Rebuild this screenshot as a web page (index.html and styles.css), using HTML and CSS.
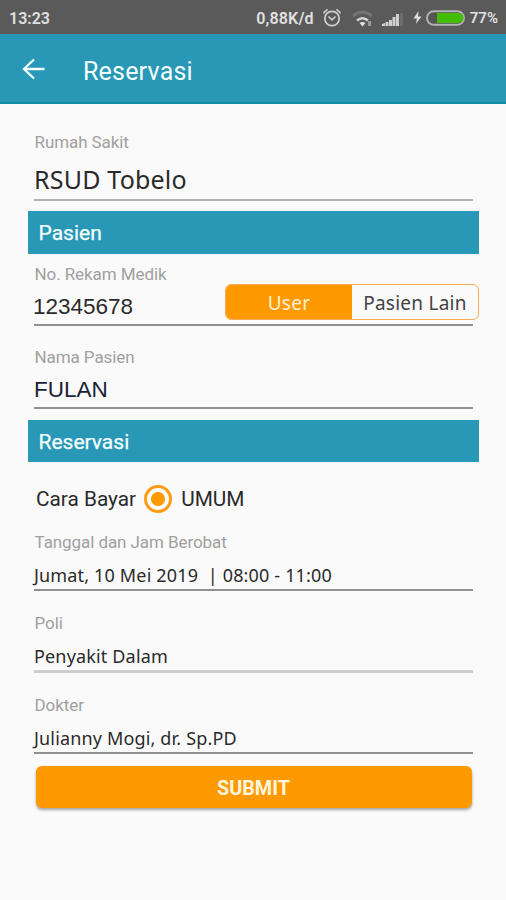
FILE: index.html
```html
<!DOCTYPE html>
<html lang="id">
<head>
<meta charset="utf-8">
<title>Reservasi</title>
<link rel="stylesheet" href="styles.css">
</head>
<body>
<div class="status">
  <span class="clock">13:23</span>
  <span class="rate">0,88K/d</span>
  <svg class="alarm" width="20" height="20" viewBox="0 0 20 20" fill="none" stroke="#cecece" stroke-width="1.7" stroke-linecap="round"><circle cx="10" cy="10.5" r="7.2"/><path d="M1.8 4.6 5 1.8M18.2 4.6 15 1.8M7 9l3 2.8L13 9"/></svg>
  <svg class="wifi" width="22" height="20" viewBox="0 0 22 20" fill="none"><path d="M1 7Q10.500-1 20 7" stroke="#747474" stroke-width="3"/><path d="M5 11.500Q10.500 7 16 11.500" stroke="#d5d5d5" stroke-width="2.400"/><path d="M7.500 14Q10.500 12 13.500 14L10.500 17.500Z" fill="#e2e2e2"/><path d="M17.500 12v5" stroke="#999" stroke-width="3"/></svg>
  <svg class="signal" width="22" height="20" viewBox="0 0 22 20" fill="#d0d0d0"><path d="M0 17v-2l3-1v3zM3.500 17v-4h3v4zM7 17v-6h3v6zM10.500 17V8h3v9zM14 17V5h3v12z"/><path d="M18 4h3v13h-3z" fill="#6c6c6c"/></svg>
  <svg class="bolt" width="9" height="14" viewBox="0 0 9 14"><path d="M5.500 0 .500 7.500H4L2.800 13 8.500 5.500H5z" fill="#ddd"/></svg>
  <svg class="battery" width="39" height="16" viewBox="0 0 39 16"><rect x="1" y="1.200" width="37" height="13.600" rx="6.800" fill="#555" stroke="#b4b4b4" stroke-width="1.900"/><path d="M11 3h21.500a5 5 0 0 1 0 10H11z" fill="#43bd00"/></svg>
  <span class="percent">77%</span>
</div>
<header class="bar">
  <svg class="back" width="24" height="22" viewBox="0 0 24 22" fill="none" stroke="#f3ffff" stroke-width="2.300"><path d="M22.500 11H2M12 1.500 2 11l10 9.500"/></svg>
  <h1>Reservasi</h1>
</header>
<main>
  <section class="field hospital"><div class="label"><span>Rumah Sakit</span></div><div class="value"><span>RSUD Tobelo</span></div></section>
  <h2 class="band first"><span>Pasien</span></h2>
  <section class="field record">
    <div class="label"><span>No. Rekam Medik</span></div>
    <div class="value"><span>12345678</span></div>
    <div class="toggle"><span class="on">User</span><span class="off">Pasien Lain</span></div>
  </section>
  <section class="field patient"><div class="label"><span>Nama Pasien</span></div><div class="value"><span>FULAN</span></div></section>
  <h2 class="band"><span>Reservasi</span></h2>
  <div class="payment"><span class="pay-label">Cara Bayar</span><span class="radio"></span><span class="pay-value">UMUM</span></div>
  <section class="field date"><div class="label"><span>Tanggal dan Jam Berobat</span></div><div class="value"><span>Jumat, 10 Mei 2019&nbsp; | 08:00 - 11:00</span></div></section>
  <section class="field poli"><div class="label"><span>Poli</span></div><div class="value"><span>Penyakit Dalam</span></div></section>
  <section class="field doctor"><div class="label"><span>Dokter</span></div><div class="value"><span>Julianny Mogi, dr. Sp.PD</span></div></section>
  <button class="submit">SUBMIT</button>
</main>
</body>
</html>
```
FILE: styles.css
```css
* { box-sizing: border-box; }
body { margin: 0; height: 900px; background: #fafafa; font-family: Roboto, sans-serif; color: #2a2a2a; overflow: hidden; }
span { white-space: pre; }
.status { height: 34px; background: #5a5a5a; color: #e0e0e0; display: flex; align-items: center; padding: 2px 8px 0 9px; font-size: 16px; font-weight: 600; }
.rate { margin-left: auto; letter-spacing: .15px; }
.alarm { margin-left: 8px; }
.wifi { margin-left: 10px; margin-top: 2px; }
.signal { margin-left: 8px; margin-top: 2px; }
.bolt { margin-left: 9px; }
.battery { margin-left: 4px; }
.percent { margin-left: 5px; font-size: 15px; }
.bar { height: 70px; background: #2997b6; border-bottom: 2px solid #128ba6; display: flex; align-items: center; padding: 2px 0 0 22px; color: #f3ffff; }
.bar h1 { margin: 4px 0 0 37px; font-size: 25px; font-weight: 400; letter-spacing: .2px; }
main { padding: 28px 33px 0 34px; }
.field { position: relative; display: flex; flex-direction: column; }
.label { height: 20px; line-height: 20px; font-size: 17px; letter-spacing: -.08px; padding-left: .5px; color: #a0a0a0; }
.value { display: flex; align-items: center; height: 39px; border-bottom: 2px solid #919191; font-family: "Noto Sans", sans-serif; font-size: 18px; letter-spacing: .16px; }
.hospital .value { height: 49px; padding-top: 7px; font-size: 25px; letter-spacing: .2px; border-color: #b1b1b1; }
.band { margin: 11px -5.500px 0 -6px; height: 42px; background: #2997b6; color: #f3ffff; display: flex; align-items: center; padding: 1px 0 0 10.500px; font-size: 21px; font-weight: 400; -webkit-text-stroke: .25px #f3ffff; }
.first { margin-top: 10px; height: 43px; }
.record { margin-top: 10px; }
.record .value { height: 42px; padding-top: 5px; font-family: "Liberation Sans", sans-serif; font-size: 22.500px; letter-spacing: 0; text-indent: -1px; }
.toggle { position: absolute; top: 20px; left: 191px; width: 254px; height: 36px; display: flex; border: 1.500px solid #f7ac59; border-radius: 6px; overflow: hidden; font-family: "Noto Sans", sans-serif; font-size: 19px; letter-spacing: .25px; line-height: 36px; text-align: center; }
.on { width: 126px; background: #ff9900; color: #fff0d5; }
.off { flex: 1; color: #444; }
.patient { margin-top: 21px; }
.patient .value { height: 42px; padding-top: 5px; font-family: "Liberation Sans", sans-serif; font-size: 22.500px; letter-spacing: 0; color: #192337; }
.payment { height: 70px; display: flex; align-items: center; padding: 3px 0 0 2px; font-size: 20.800px; }
.radio { width: 28px; height: 28px; margin: 0 9px 0 8px; border: 3px solid #ff9b14; border-radius: 50%; background: radial-gradient(circle, #ff9900 6.500px, #fff 7.500px); }
.date .value { padding-top: 8px; }
.poli, .doctor { margin-top: 22px; }
.poli .value { height: 40px; padding-top: 9px; border-bottom: 3px solid #cdcdcd; }
.doctor .value { padding-top: 9px; }
.submit { display: block; width: 436px; height: 42px; margin: 12px 0 0 1.500px; padding: 2px 0 0; border: 0; border-radius: 6px; background: #ff9900; box-shadow: 0 2px 3px rgba(0,0,0,.35); color: #fff5df; font: 700 19.800px Roboto, sans-serif; }
```
